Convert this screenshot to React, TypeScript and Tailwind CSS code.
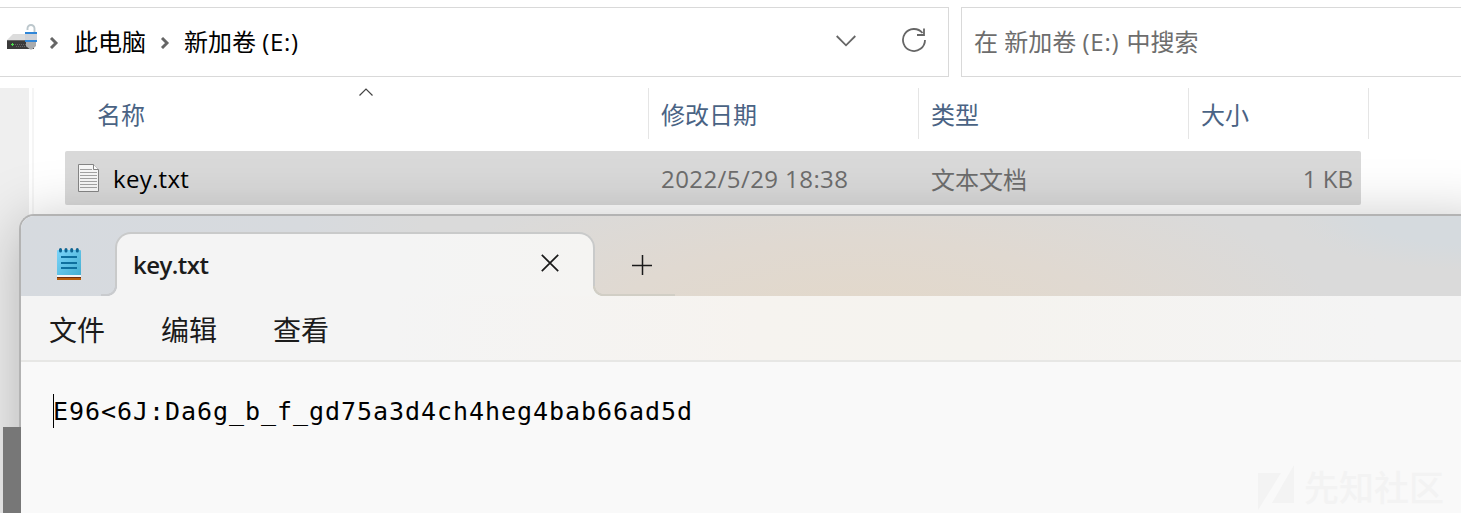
import React from "react";

const Row = "flex items-center whitespace-nowrap";

function DriveIcon() {
  return (
    <svg className="block h-[30px] w-[32px]" viewBox="0 0 32 30">
      <path d="M6 11H20V17H0Z" fill="#dcdcdc" />
      <path d="M0 17H27V26H0Z" fill="#3a3a3a" />
      <path d="M0 17H20V18H0Z" fill="#666" />
      <path d="M8 21.5H20M9 23.5H20" stroke="#666" strokeWidth="1" strokeDasharray="1 1" />
      <path d="M4 21.5H7M5.5 20V23" stroke="#4be04b" strokeWidth="1" />
      <path d="M20.5 7V5.5a3.5 3.5 0 0 1 7 0V9" fill="none" stroke="#bcc7cc" strokeWidth="1.9" />
      <path d="M19 19H29V23L25 26.5H23L19 23Z" fill="#a9abad" />
      <rect x="18" y="10" width="12" height="9" fill="#cfd2d8" />
      <rect x="18" y="9" width="12" height="2" fill="#2f86d8" />
      <rect x="18" y="17" width="12" height="2" fill="#2f86d8" />
    </svg>
  );
}

function Crumb() {
  return (
    <svg className="block h-[12px] w-[10px]" viewBox="0 0 10 12">
      <path d="M2 1L7 6L2 11" fill="none" stroke="#666" strokeWidth="2.9" />
    </svg>
  );
}

function FileIcon() {
  return (
    <svg className="block h-[28px] w-[21px]" viewBox="0 0 21 28">
      <path d="M.5 .5H15.5L20.5 5.5V27.5H.5Z" fill="#f7f7f7" stroke="#858585" />
      <path d="M15.5 .5V5.5H20.5" fill="#fff" stroke="#858585" />
      <path d="M2 5.5H14M2 8.5H19M2 11.5H19M2 14.5H19M2 17.5H19M2 20.5H19M2 23.5H19" stroke="#a3a3a3" />
    </svg>
  );
}

function NotepadIcon() {
  return (
    <svg className="block h-[33px] w-[24px]" viewBox="0 0 24 33">
      <defs>
        <linearGradient id="pad" x1="0" y1="0" x2="1" y2="1">
          <stop offset="0" stopColor="#7ad4fa" />
          <stop offset="1" stopColor="#44aed0" />
        </linearGradient>
      </defs>
      <rect x="0" y="2" width="24" height="26" rx="1" fill="url(#pad)" />
      <rect x="0" y="27" width="24" height="2" fill="#f4f4f4" />
      <rect x="0" y="29" width="24" height="1.5" fill="#6b2d10" />
      <rect x="0" y="30" width="24" height="2" fill="#b85c08" />
      <path d="M3.5 1.5V3M9 1.5V3M14.7 1.5V3M20.3 1.5V3" stroke="#0e6593" strokeWidth="3" strokeLinecap="round" />
      <path d="M4 9H20M4 15H20M4 20H20" stroke="#0e6f9e" strokeWidth="2" />
    </svg>
  );
}

function Explorer() {
  return (
    <div className="flex h-[513px] w-full flex-col bg-white pt-[7px] text-[24px]">
      <div className="flex h-[70px] gap-[12px]">
        <div className={`${Row} w-[949px] border border-l-0 border-[#d9d9d9] pl-[7px]`}>
          <div className="mt-[-8px]"><DriveIcon /></div>
          <div className="ml-[10px] mt-[2px]"><Crumb /></div>
          <span className="ml-[15px] w-[72px]">此电脑</span>
          <div className="ml-[14px] mt-[2px]"><Crumb /></div>
          <span className="ml-[14px]">新加卷 <span className="tracking-[0.7px]">(E:)</span></span>
          <svg className="ml-auto mt-[-2px] h-[12px] w-[20px]" viewBox="0 0 20 12"><path d="M.7 1L10 10.3L19.3 1" fill="none" stroke="#666" strokeWidth="1.8" /></svg>
          <svg className="ml-[46px] mr-[22px] mt-[-4px] h-[24px] w-[24px]" viewBox="0 0 24 24"><path d="M20.5 5A11 11 0 1 0 23 12M22 .5V7H15" fill="none" stroke="#666" strokeWidth="1.8" /></svg>
        </div>
        <div className={`${Row} flex-1 border border-r-0 border-[#d9d9d9] pl-[12px] text-[#6d6d6d]`}>
          <span>在 新加卷 <span className="tracking-[0.8px]">(E:) </span>中搜索</span>
        </div>
      </div>
      <div className="mt-[11px] flex flex-1">
        <div className="w-[29px] bg-[#efefef]" />
        <div className="ml-[3px] w-[2px] bg-[#f5f5f5]" />
        <div className="ml-[31px] flex flex-1 flex-col">
          <div className="flex h-[51px] text-[#4a6384]">
            <div className="flex w-[584px] items-center border-r border-[#e5e5e5] pl-[32px] pt-[2px]">
              <span className="w-[262px]">名称</span>
              <svg className="mb-[45px] h-[8px] w-[14px]" viewBox="0 0 14 8"><path d="M.5 7.5L7 1L13.5 7.5" fill="none" stroke="#444" strokeWidth="1.2" /></svg>
            </div>
            <div className={`${Row} w-[270px] border-r border-[#e5e5e5] pl-[12px] pt-[2px]`}>修改日期</div>
            <div className={`${Row} w-[270px] border-r border-[#e5e5e5] pl-[12px] pt-[2px]`}>类型</div>
            <div className={`${Row} w-[180px] border-r border-[#e5e5e5] pl-[12px] pt-[2px]`}>大小</div>
          </div>
          <div className={`${Row} mt-[12px] h-[54px] w-[1296px] rounded-[2px] bg-[#d9d9d9] text-[#6d6d6d]`}>
            <div className="ml-[13px]"><FileIcon /></div>
            <span className="ml-[14px] mt-[2px] w-[548px] tracking-[0.3px] text-black">key.txt</span>
            <span className="mt-[2px] w-[270px] tracking-[0.42px]">2022/5/29 18:38</span>
            <span className="mt-[3px]">文本文档</span>
            <span className="ml-auto mr-[8px] mt-[2px]">1 KB</span>
          </div>
        </div>
      </div>
    </div>
  );
}

function TitleBar() {
  return (
    <div className="flex h-[80px] bg-[radial-gradient(ellipse_560px_190px_at_840px_110px,#e3d8c9_0%,#e0d9d1_45%,#dadada_85%,transparent_100%),radial-gradient(ellipse_220px_60px_at_1460px_0px,#d5dade_50%,#dadada00_90%),linear-gradient(100deg,#d6dadf_0px,#d7dade_280px,#dadada_400px)]">
      <div className="flex w-[94px] justify-between pt-[32px]">
        <div className="pl-[36px]"><NotepadIcon /></div>
      </div>
      <div className="mt-[16px] flex h-[64px] w-[480px] justify-between rounded-t-[16px] border-2 border-b-0 border-[#c9caca] bg-[linear-gradient(90deg,#f4f4f4_60%,#f5f4f2)] pl-[16px] pr-[34px] pt-[13px]">
        <span className="text-[24px] font-semibold leading-[36px] tracking-[-0.55px] text-[#1b1b1b]">key.txt</span>
        <svg className="mt-[7px] h-[18px] w-[18px]" viewBox="0 0 18 18"><path d="M.8 .8L17.2 17.2M17.2 .8L.8 17.2" stroke="#1a1a1a" strokeWidth="1.7" /></svg>
      </div>
      <div className="relative flex w-[160px] items-start pl-[37px] pt-[39px]">
        <svg className="h-[20px] w-[20px]" viewBox="0 0 20 20"><path d="M0 10.5H20M10.5 0V20" stroke="#1a1a1a" strokeWidth="1.5" /></svg>
        <i className="absolute bottom-0 left-[-2px] h-[10px] w-[10px] bg-[radial-gradient(circle_at_100%_0%,transparent_7.5px,#d1cec5_8px,#d1cec5_9.7px,#f4f4f2_10.3px)]" />
        <i className="absolute bottom-0 left-[8px] h-[2px] w-[72px] bg-[#d1cec5]" />
        <i className="absolute bottom-0 left-[-488px] h-[10px] w-[10px] bg-[radial-gradient(circle_at_0%_0%,transparent_7.5px,#c9cbce_8px,#c9cbce_9.7px,#f4f4f4_10.3px)]" />
        <i className="absolute bottom-0 left-[-494px] h-[2px] w-[6px] bg-[#c9cbce]" />
      </div>
    </div>
  );
}

function Notepad() {
  return (
    <div className="absolute left-[19px] top-[214px] flex h-[320px] w-[1480px] flex-col overflow-hidden rounded-tl-[15px] border-l-2 border-t-2 border-[#b3b3b3] bg-[#f9f9f9] shadow-[0_8px_60px_rgba(0,0,0,0.26)]">
      <TitleBar />
      <nav className="flex h-[66px] shrink-0 items-center gap-[56px] border-b-2 border-[#e7e7e5] bg-[linear-gradient(90deg,#f4f4f4_25%,#f6f3ef_50%,#f5f3ef_65%,#f4f4f4_92%)] pl-[28px] pt-[4px] text-[28px] text-[#1b1b1b]">
        <span>文件</span>
        <span>编辑</span>
        <span>查看</span>
      </nav>
      <div className="flex pl-[32px] pt-[32px]">
        <i className="block h-[34px] w-px bg-black" />
        <span className="ml-[-1px] whitespace-pre pt-px font-['DejaVu_Sans_Mono',monospace] text-[25px] leading-[34px] tracking-[0.95px] text-black">
          {"E96<6J:Da6g_b_f_gd75a3d4ch4heg4bab66ad5d"}
        </span>
      </div>
    </div>
  );
}

function Watermark() {
  return (
    <div className="absolute bottom-0 right-[17px] flex items-center gap-[9px] text-[#f3f3f3]">
      <svg className="h-[46px] w-[38px]" viewBox="0 0 38 46"><path d="M1 8H24L1 45ZM37 0V38H15Z" fill="currentColor" /></svg>
      <span className="text-[35px] font-medium leading-[50px]">先知社区</span>
    </div>
  );
}

export default function App() {
  return (
    <main className="relative h-[513px] w-full overflow-hidden font-['Open_Sans','Noto_Sans_CJK_SC',sans-serif]">
      <Explorer />
      <Notepad />
      <div className="absolute left-[3px] top-[427px] h-[86px] w-[18px] bg-[#777]" />
      <Watermark />
    </main>
  );
}
